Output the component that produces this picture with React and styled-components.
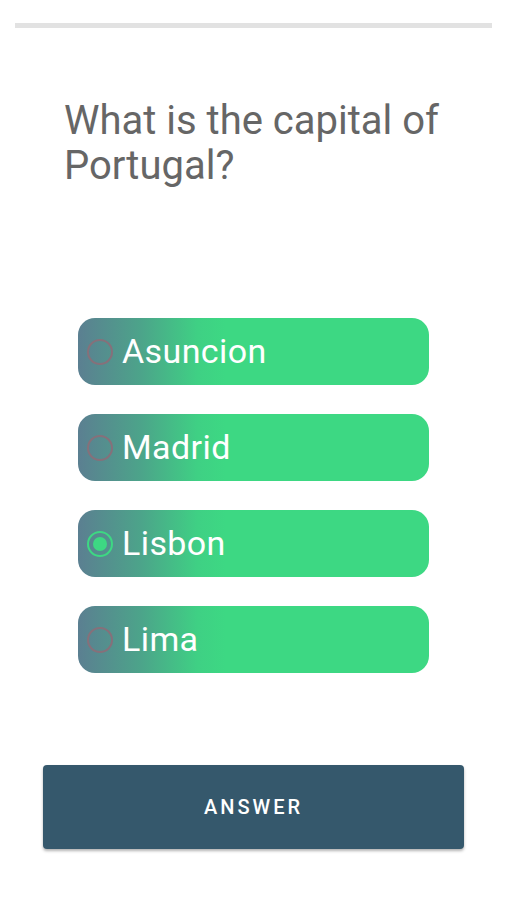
import styled, { createGlobalStyle } from 'styled-components';
import { useState } from 'react';

const GlobalStyle = createGlobalStyle`
  body {
    margin: 0;
    background: #ffffff;
    font-family: Roboto, "Liberation Sans", sans-serif;
  }
`;

const Page = styled.div`
  width: 506px;
  height: 900px;
  display: flex;
  flex-direction: column;
  box-sizing: border-box;
  padding-top: 23px;
`;

const Progress = styled.div`
  height: 5px;
  margin: 0 14px 0 15px;
  background: #e2e2e2;
`;

const Question = styled.h1`
  margin: 70px 30px 0 64px;
  font-size: 40px;
  font-weight: 400;
  line-height: 45px;
  color: #666666;
`;

const Options = styled.div`
  display: flex;
  flex-direction: column;
  gap: 29px;
  margin: 130px 0 0 78px;
  width: 351px;
`;

const Option = styled.label`
  height: 67px;
  border-radius: 17px;
  display: flex;
  align-items: center;
  padding-left: 9px;
  gap: 9px;
  background: linear-gradient(90deg, #5b7f91 0%, #4ca48a 18%, #3fd084 34%, #3dd883 42%, #3dd883 100%);
  cursor: pointer;
`;

const Radio = styled.span`
  width: 26px;
  height: 26px;
  box-sizing: border-box;
  border-radius: 50%;
  border: 2px solid ${(p) => (p.$checked ? '#3dd883' : '#86707a')};
  display: flex;
  align-items: center;
  justify-content: center;

  &::after {
    content: '';
    width: 14px;
    height: 14px;
    border-radius: 50%;
    background: #3dd883;
    display: ${(p) => (p.$checked ? 'block' : 'none')};
  }
`;

const OptionText = styled.span`
  font-size: 34px;
  letter-spacing: 0.4px;
  color: #ffffff;
  margin-top: -2px;
`;

const AnswerButton = styled.button`
  margin: 92px 42px 0 43px;
  height: 84px;
  border: none;
  border-radius: 4px;
  background: #35586c;
  color: #ffffff;
  font-family: Roboto, "Liberation Sans", sans-serif;
  font-size: 20px;
  font-weight: 500;
  letter-spacing: 3px;
  box-shadow: 0 2px 3px rgba(0, 0, 0, 0.3);
`;

const choices = ['Asuncion', 'Madrid', 'Lisbon', 'Lima'];

export default function App() {
  const [selected, setSelected] = useState('Lisbon');

  return (
    <Page>
      <GlobalStyle />
      <Progress />
      <Question>What is the capital of Portugal?</Question>
      <Options>
        {choices.map((c) => (
          <Option key={c} onClick={() => setSelected(c)}>
            <Radio $checked={selected === c} />
            <OptionText>{c}</OptionText>
          </Option>
        ))}
      </Options>
      <AnswerButton>ANSWER</AnswerButton>
    </Page>
  );
}
